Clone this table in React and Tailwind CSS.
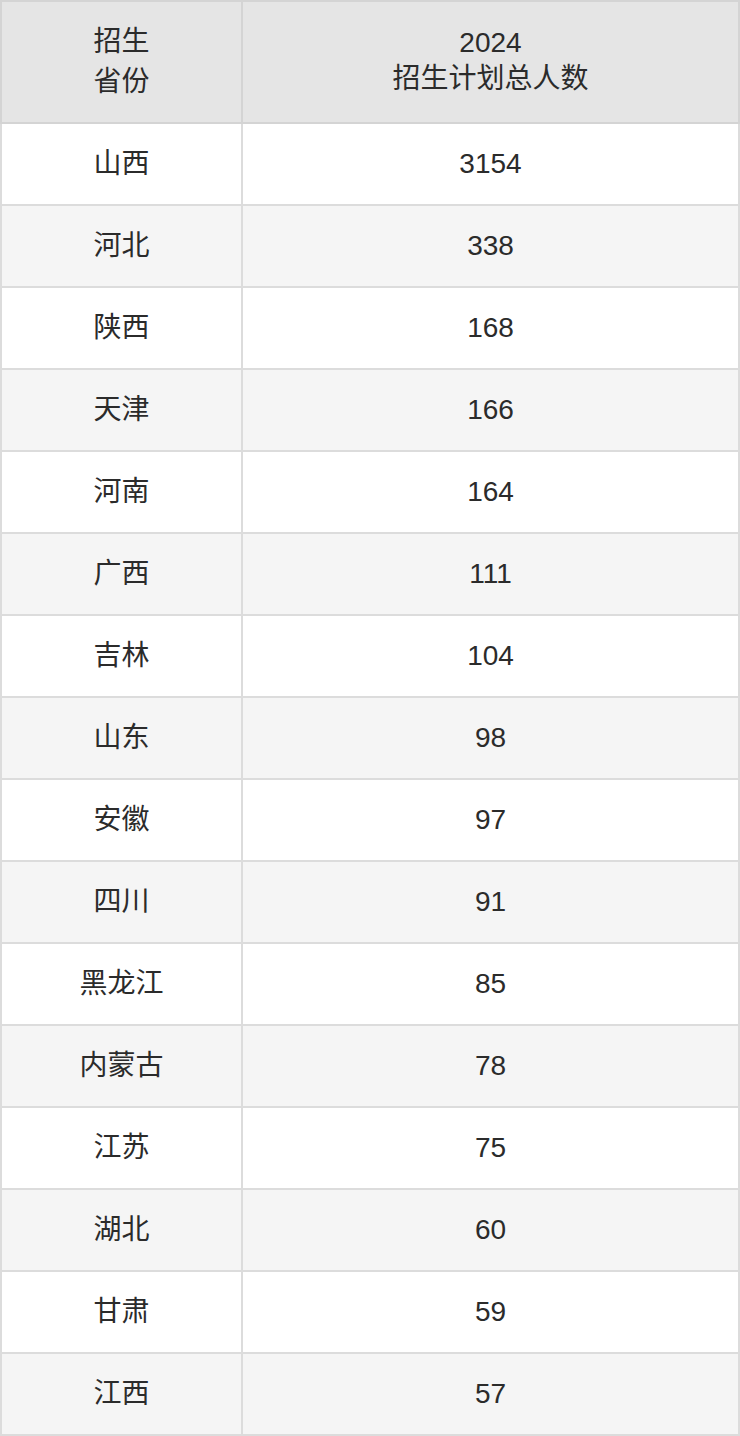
import React from "react";

const rows = [
    ["山西", "3154"],
    ["河北", "338"],
    ["陕西", "168"],
    ["天津", "166"],
    ["河南", "164"],
    ["广西", "111"],
    ["吉林", "104"],
    ["山东", "98"],
    ["安徽", "97"],
    ["四川", "91"],
    ["黑龙江", "85"],
    ["内蒙古", "78"],
    ["江苏", "75"],
    ["湖北", "60"],
    ["甘肃", "59"],
    ["江西", "57"],
];

const App = () => {
    return (
        <div className="w-[740px] bg-white font-['Liberation_Sans','Noto_Sans_CJK_SC',sans-serif] text-[28px] text-[#2b2b2b]">
            <table className="w-[740px] border-collapse border-2 border-[#d4d4d4] table-fixed">
                <colgroup>
                    <col className="w-[241px]" />
                    <col />
                </colgroup>
                <thead>
                    <tr className="bg-[#e5e5e5] h-[122px]">
                        <th className="border-2 border-[#d4d4d4] font-normal leading-[40px] text-center">
                            招生<br />省份
                        </th>
                        <th className="border-2 border-[#d4d4d4] font-normal leading-[36px] text-center">
                            <div className="-mt-[2px]">2024<br />招生计划总人数</div>
                        </th>
                    </tr>
                </thead>
                <tbody>
                    {rows.map(([prov, num], i) => (
                        <tr key={prov} className={`h-[82px] ${i % 2 === 1 ? "bg-[#f5f5f5]" : "bg-white"}`}>
                            <td className="border-2 border-[#dcdcdc] text-center">{prov}</td>
                            <td className="border-2 border-[#dcdcdc] text-center">{num}</td>
                        </tr>
                    ))}
                </tbody>
            </table>
        </div>
    );
};

export default App;
